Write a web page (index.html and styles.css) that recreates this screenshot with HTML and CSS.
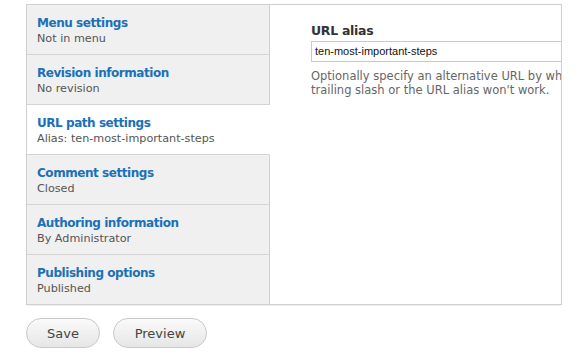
FILE: index.html
```html
<!DOCTYPE html>
<html>
<head>
<meta charset="utf-8">
<link rel="stylesheet" href="styles.css">
</head>
<body>
<div class="page">
  <div class="vtabs">
    <ul class="tab-list">
      <li class="tab"><a class="tab-title">Menu settings</a><span class="tab-summary">Not in menu</span></li>
      <li class="tab"><a class="tab-title">Revision information</a><span class="tab-summary">No revision</span></li>
      <li class="tab active"><a class="tab-title">URL path settings</a><span class="tab-summary">Alias: ten-most-important-steps</span></li>
      <li class="tab"><a class="tab-title">Comment settings</a><span class="tab-summary">Closed</span></li>
      <li class="tab"><a class="tab-title">Authoring information</a><span class="tab-summary">By Administrator</span></li>
      <li class="tab"><a class="tab-title">Publishing options</a><span class="tab-summary">Published</span></li>
    </ul>
    <div class="pane">
      <label class="field-label">URL alias</label>
      <div class="input">ten-most-important-steps</div>
      <p class="description">Optionally specify an alternative URL by which this content can be accessed. For example, type "about" when writing an about page. Use a relative path and don't add a<br>trailing slash or the URL alias won't work.</p>
    </div>
  </div>
  <div class="actions">
    <button class="btn">Save</button>
    <button class="btn">Preview</button>
  </div>
</div>
</body>
</html>
```
FILE: styles.css
```css
html, body {
  margin: 0;
  padding: 0;
  background: #fff;
  overflow: hidden;
}
body {
  font-family: "DejaVu Sans", Verdana, sans-serif;
}
.page {
  padding: 4px 0 0 26px;
  width: 536px;
}
.vtabs {
  display: flex;
  border: 1px solid #cfcfcf;
  height: 301px;
  box-sizing: border-box;
  box-shadow: 0 2px 1px -1px #f0f0f0;
}
.tab-list {
  list-style: none;
  margin: 0;
  padding: 0;
  width: 243px;
  flex: none;
  display: flex;
  flex-direction: column;
}
.tab {
  height: 50px;
  flex: none;
  box-sizing: border-box;
  background: #f0f0f0;
  border-bottom: 1px solid #d4d4d4;
  border-right: 1px solid #cfcfcf;
  padding: 11px 0 0 10px;
  display: flex;
  flex-direction: column;
}
.tab:last-child { border-bottom: none; flex: 1; height: auto; }
.tab.active {
  background: #fff;
  border-right-color: #fff;
}
.tab-title {
  color: #1b70b8;
  font-weight: bold;
  font-size: 12px;
  letter-spacing: -0.45px;
  line-height: 15px;
}
.tab-summary {
  color: #555;
  font-size: 11.2px;
  line-height: 16px;
  white-space: nowrap;
}
.pane {
  flex: 1;
  padding: 18px 0 0 41px;
  overflow: hidden;
  min-width: 0;
}
.field-label {
  display: block;
  font-weight: bold;
  font-size: 12.5px;
  letter-spacing: -0.3px;
  color: #333;
  line-height: 16px;
  margin-bottom: 2px;
}
.input {
  border: 1px solid #b9cde0;
  border-right: none;
  height: 21px;
  box-sizing: border-box;
  font-family: "Liberation Sans", Arial, sans-serif;
  font-size: 11px;
  line-height: 19px;
  padding-left: 3px;
  color: #111;
}
.description {
  margin: 7px 0 0;
  font-size: 11.5px;
  line-height: 14px;
  color: #666;
  white-space: nowrap;
}
.actions {
  display: flex;
  gap: 13px;
  padding-top: 13px;
}
.btn {
  font-family: "DejaVu Sans", sans-serif;
  font-size: 13px;
  color: #444;
  height: 30px;
  border: 1px solid #c8c8c8;
  border-radius: 15px;
  background: linear-gradient(#fafafa, #e6e6e6);
  padding: 0;
  margin: 0;
}
.btn:first-child { width: 74px; }
.btn:last-child { width: 94px; }
```
